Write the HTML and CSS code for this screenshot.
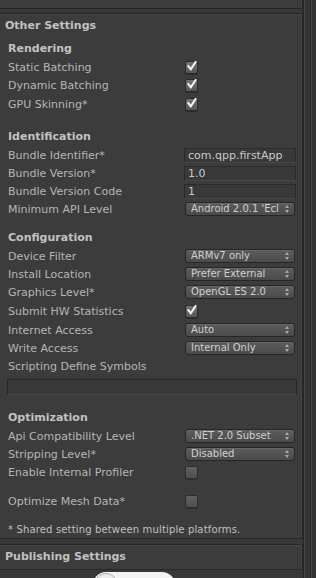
FILE: index.html
```html
<!DOCTYPE html>
<html>
<head>
<meta charset="utf-8">
<link rel="stylesheet" href="styles.css">
</head>
<body>
<div class="screen">
  <div class="main">
    <div class="panel splash"><div class="ph">Splash Image</div></div>

    <div class="panel other">
      <div class="ph">Other Settings</div>

      <div class="sec first">
        <div class="sh">Rendering</div>
        <div class="row cbrow"><span class="lbl">Static Batching</span><span class="check"><svg viewBox="0 0 12 12"><path d="M2.6 5.6 L5.2 9 L10.4 1.2"/></svg></span></div>
        <div class="row cbrow"><span class="lbl">Dynamic Batching</span><span class="check"><svg viewBox="0 0 12 12"><path d="M2.6 5.6 L5.2 9 L10.4 1.2"/></svg></span></div>
        <div class="row cbrow"><span class="lbl">GPU Skinning*</span><span class="check"><svg viewBox="0 0 12 12"><path d="M2.6 5.6 L5.2 9 L10.4 1.2"/></svg></span></div>
      </div>

      <div class="sec ident">
        <div class="sh">Identification</div>
        <div class="row"><span class="lbl">Bundle Identifier*</span><span class="field">com.qpp.firstApp</span></div>
        <div class="row"><span class="lbl">Bundle Version*</span><span class="field">1.0</span></div>
        <div class="row"><span class="lbl">Bundle Version Code</span><span class="field">1</span></div>
        <div class="row"><span class="lbl">Minimum API Level</span><span class="popup"><span class="pv">Android 2.0.1 'Ecl</span><span class="arr"></span></span></div>
      </div>

      <div class="sec config">
        <div class="sh">Configuration</div>
        <div class="row"><span class="lbl">Device Filter</span><span class="popup"><span class="pv">ARMv7 only</span><span class="arr"></span></span></div>
        <div class="row"><span class="lbl">Install Location</span><span class="popup"><span class="pv">Prefer External</span><span class="arr"></span></span></div>
        <div class="row"><span class="lbl">Graphics Level*</span><span class="popup"><span class="pv">OpenGL ES 2.0</span><span class="arr"></span></span></div>
        <div class="row taller"><span class="lbl">Submit HW Statistics</span><span class="check"><svg viewBox="0 0 12 12"><path d="M2.6 5.6 L5.2 9 L10.4 1.2"/></svg></span></div>
        <div class="row"><span class="lbl">Internet Access</span><span class="popup"><span class="pv">Auto</span><span class="arr"></span></span></div>
        <div class="row"><span class="lbl">Write Access</span><span class="popup"><span class="pv">Internal Only</span><span class="arr"></span></span></div>
        <div class="row single"><span class="lbl">Scripting Define Symbols</span></div>
        <div class="widefield"></div>
      </div>

      <div class="sec optim">
        <div class="sh">Optimization</div>
        <div class="row"><span class="lbl">Api Compatibility Level</span><span class="popup"><span class="pv">.NET 2.0 Subset</span><span class="arr"></span></span></div>
        <div class="row"><span class="lbl">Stripping Level*</span><span class="popup"><span class="pv">Disabled</span><span class="arr"></span></span></div>
        <div class="row tall"><span class="lbl">Enable Internal Profiler</span><span class="check off"></span></div>
        <div class="row spaced"><span class="lbl">Optimize Mesh Data*</span><span class="check off"></span></div>
      </div>

      <div class="note">* Shared setting between multiple platforms.</div>
    </div>

    <div class="panel publish"><div class="ph">Publishing Settings</div></div>
    <div class="toggle"><span class="knob"></span></div>
  </div>
  <div class="scroll"><div class="track"></div></div>
</div>
</body>
</html>
```

FILE: styles.css
```css
* { box-sizing: border-box; }

html, body {
  margin: 0;
  padding: 0;
  width: 316px;
  height: 578px;
  overflow: hidden;
  background: #383838;
  font-family: "DejaVu Sans", Verdana, sans-serif;
  font-size: 11px;
  color: #b6b6b6;
}

.screen {
  display: flex;
  width: 316px;
  height: 578px;
  overflow: hidden;
}

.main {
  width: 303px;
  flex: none;
  display: flex;
  flex-direction: column;
}
.main > * { flex: none; }

.panel {
  margin-left: -1px;
  width: 304px;
  background: #3c3c3c;
  border: 1px solid #262626;
  box-shadow: inset 0 1px 0 #474747, inset -1px 0 0 #444;
}

.ph {
  font-weight: bold;
  color: #c2c2c2;
  padding-left: 5px;
  white-space: nowrap;
}

.splash {
  margin-top: -12px;
  height: 21px;
  border-top: none;
}
.splash .ph {
  line-height: 14px;
}

.other {
  margin-top: 4px;
  padding-bottom: 1px;
}
.other > .ph {
  line-height: 22px;
  height: 23px;
  padding-top: 1px;
}

.sec { padding-left: 8px; }
.sec.first { margin-top: 3px; }
.sec.ident { margin-top: 14.5px; }
.sec.config { margin-top: 11px; }
.sec.optim { margin-top: 14px; }

.sh {
  font-weight: bold;
  color: #c2c2c2;
  height: 18px;
  line-height: 18px;
}

.row {
  display: grid;
  grid-template-columns: 176px 112px;
  align-items: center;
  height: 18px;
}
.row.cbrow { height: 18.5px; }
.row.tall { height: 19px; }
.row.taller { height: 20px; }
.row.spaced { margin-top: 10px; }
.row.single { display: block; height: 19px; line-height: 20px; }

.lbl { white-space: nowrap; }

.field {
  display: block;
  height: 15px;
  line-height: 13px;
  padding-left: 3px;
  border: 1px solid #2b2b2b;
  border-bottom-color: #464646;
  background: #393939;
  color: #cacaca;
  white-space: nowrap;
  overflow: hidden;
}

.popup {
  display: flex;
  align-items: center;
  margin-left: 1px;
  width: 110px;
  height: 14px;
  border: 1px solid #262626;
  border-radius: 3px;
  background: linear-gradient(#5c5c5c, #4a4a4a);
  box-shadow: inset 0 1px 0 #666;
  color: #cfcfcf;
  font-size: 10px;
  padding-left: 5px;
  overflow: hidden;
}
.pv {
  flex: 1;
  white-space: nowrap;
  overflow: hidden;
  line-height: 12px;
}
.arr {
  flex: none;
  width: 9px;
  height: 8px;
  margin-right: 2px;
  position: relative;
}
.arr::before, .arr::after {
  content: "";
  position: absolute;
  left: 2px;
  width: 0;
  height: 0;
  border-left: 2px solid transparent;
  border-right: 2px solid transparent;
}
.arr::before { top: 0; border-bottom: 3px solid #a8a8a8; }
.arr::after { top: 5px; border-top: 3px solid #a8a8a8; }

.check {
  display: block;
  margin-left: 1px;
  width: 13px;
  height: 13px;
  border-radius: 2px;
  background: linear-gradient(#727272, #565656);
  border: 1px solid #2a2a2a;
  box-shadow: 0 1px 0 #2e2e2e;
  position: relative;
}
.check svg {
  position: absolute;
  left: 0;
  top: -1px;
  width: 11px;
  height: 11px;
  overflow: visible;
}
.check svg path {
  fill: none;
  stroke: #f6f6f6;
  stroke-width: 2.2;
  stroke-linecap: square;
}
.check.off {
  background: linear-gradient(#626262, #4e4e4e);
  border-color: #2e2e2e;
}

.widefield {
  margin: 3px 0 0 -1px;
  width: 290px;
  height: 16px;
  border: 1px solid #262626;
  border-bottom-color: #464646;
  background: #393939;
}

.note {
  margin-top: 13px;
  padding-left: 8px;
  height: 14px;
  line-height: 14px;
  font-size: 10px;
  letter-spacing: 0.15px;
  color: #c0c0c0;
  white-space: nowrap;
}

.publish {
  margin-top: 5px;
}
.publish .ph {
  height: 24px;
  line-height: 24px;
}

.toggle {
  margin: 2px 0 0 93px;
  width: 82px;
  height: 26px;
  border-radius: 13px;
  background: #f4f4f4;
  position: relative;
}
.knob {
  position: absolute;
  left: 1px;
  top: 1px;
  width: 24px;
  height: 24px;
  border-radius: 50%;
  background: #ececec;
  border: 1px solid #b0b0b0;
}

.scroll {
  flex: none;
  width: 13px;
  height: 578px;
  background: #333;
  border-left: 1px solid #262626;
  box-shadow: inset 1px 0 0 #444;
}
.track {
  margin-left: 6px;
  width: 2px;
  height: 100%;
  border-left: 1px solid #262626;
  border-right: 1px solid #474747;
}
```
